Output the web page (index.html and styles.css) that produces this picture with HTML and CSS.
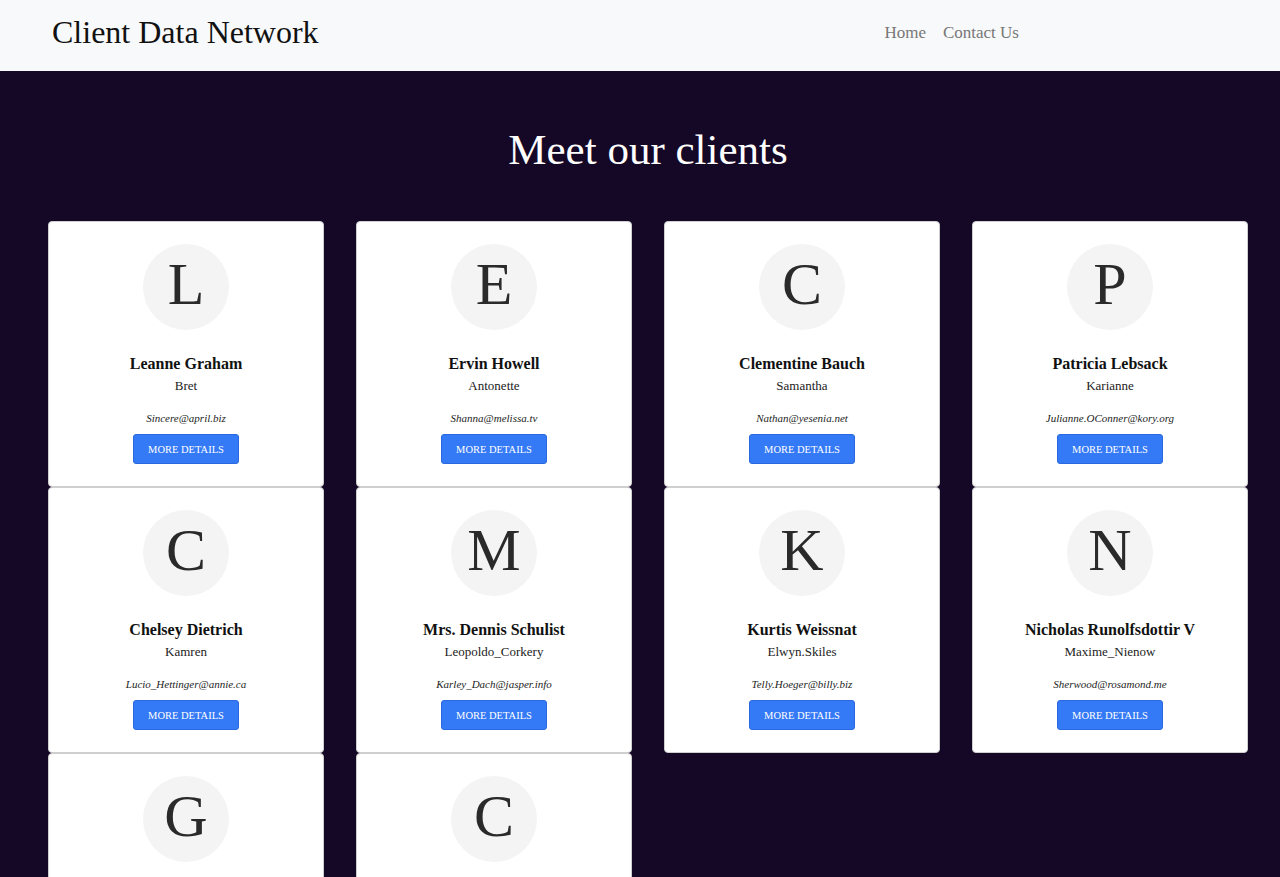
FILE: index.html
```html
<!DOCTYPE html>
<html lang="en">
<head>
<meta charset="utf-8">
<title>Client Data Network</title>
<link rel="stylesheet" href="styles.css">
</head>
<body>
<header class="navbar">
  <div class="brand">Client Data Network</div>
  <nav class="nav">
    <a href="#" class="nav-link">Home</a>
    <a href="#" class="nav-link">Contact Us</a>
  </nav>
</header>
<main class="main">
  <h1 class="heading">Meet our clients</h1>
  <div class="grid">
    <div class="col"><div class="card"><div class="avatar">L</div><div class="name">Leanne Graham</div><div class="user">Bret</div><div class="email">Sincere@april.biz</div><button class="btn">More Details</button></div></div>
    <div class="col"><div class="card"><div class="avatar">E</div><div class="name">Ervin Howell</div><div class="user">Antonette</div><div class="email">Shanna@melissa.tv</div><button class="btn">More Details</button></div></div>
    <div class="col"><div class="card"><div class="avatar">C</div><div class="name">Clementine Bauch</div><div class="user">Samantha</div><div class="email">Nathan@yesenia.net</div><button class="btn">More Details</button></div></div>
    <div class="col"><div class="card"><div class="avatar">P</div><div class="name">Patricia Lebsack</div><div class="user">Karianne</div><div class="email">Julianne.OConner@kory.org</div><button class="btn">More Details</button></div></div>
    <div class="col"><div class="card"><div class="avatar">C</div><div class="name">Chelsey Dietrich</div><div class="user">Kamren</div><div class="email">Lucio_Hettinger@annie.ca</div><button class="btn">More Details</button></div></div>
    <div class="col"><div class="card"><div class="avatar">M</div><div class="name">Mrs. Dennis Schulist</div><div class="user">Leopoldo_Corkery</div><div class="email">Karley_Dach@jasper.info</div><button class="btn">More Details</button></div></div>
    <div class="col"><div class="card"><div class="avatar">K</div><div class="name">Kurtis Weissnat</div><div class="user">Elwyn.Skiles</div><div class="email">Telly.Hoeger@billy.biz</div><button class="btn">More Details</button></div></div>
    <div class="col"><div class="card"><div class="avatar">N</div><div class="name">Nicholas Runolfsdottir V</div><div class="user">Maxime_Nienow</div><div class="email">Sherwood@rosamond.me</div><button class="btn">More Details</button></div></div>
    <div class="col"><div class="card"><div class="avatar">G</div><div class="name">Glenna Reichert</div><div class="user">Delphine</div><div class="email">Chaim_McDermott@dana.io</div><button class="btn">More Details</button></div></div>
    <div class="col"><div class="card"><div class="avatar">C</div><div class="name">Clementina DuBuque</div><div class="user">Moriah.Stanton</div><div class="email">Rey.Padberg@karina.biz</div><button class="btn">More Details</button></div></div>
  </div>
</main>
</body>
</html>
```

FILE: styles.css
```css
* { box-sizing: border-box; }
html, body {
  margin: 0;
  padding: 0;
  font-family: "Liberation Serif", "Times New Roman", serif;
  background: #150826;
}
.navbar {
  height: 71px;
  background: #f8f9fa;
  display: flex;
  align-items: center;
  padding: 0 0 7px 52px;
}
.brand {
  font-size: 32px;
  color: #111;
  line-height: 40px;
}
.nav {
  margin-left: auto;
  margin-right: 261px;
  display: flex;
  gap: 17px;
  padding-top: 2px;
}
.nav-link {
  font-size: 17px;
  color: #777;
  text-decoration: none;
}
.main {
  padding: 55px 16px 40px 32px;
}
.heading {
  margin: 0 0 47px 0;
  text-align: center;
  color: #fff;
  font-weight: normal;
  font-size: 43px;
  line-height: 48px;
}
.grid {
  display: grid;
  grid-template-columns: repeat(4, 1fr);
}
.col {
  padding: 0 16px;
}
.card {
  background: #fff;
  border: 1px solid #cfcfcf;
  border-radius: 4px;
  padding: 22px 10px 22px;
  display: flex;
  flex-direction: column;
  align-items: center;
  text-align: center;
}
.avatar {
  width: 86px;
  height: 86px;
  border-radius: 50%;
  background: #f4f4f4;
  color: #2a2a2a;
  font-size: 60px;
  line-height: 80px;
  text-align: center;
}
.name {
  margin-top: 24px;
  font-size: 16px;
  font-weight: bold;
  line-height: 20px;
  color: #111;
}
.user {
  margin-top: 4px;
  font-size: 13px;
  line-height: 16px;
  color: #222;
}
.email {
  margin-top: 17px;
  font-size: 11px;
  line-height: 14px;
  font-style: italic;
  color: #1c241c;
}
.btn {
  margin-top: 9px;
  height: 30px;
  padding: 0 14px;
  background: #3479f5;
  border: 1px solid #2a68de;
  border-radius: 3px;
  color: #fff;
  font-family: "Liberation Serif", "Times New Roman", serif;
  font-size: 10.5px;
  text-transform: uppercase;
  cursor: pointer;
}
```
